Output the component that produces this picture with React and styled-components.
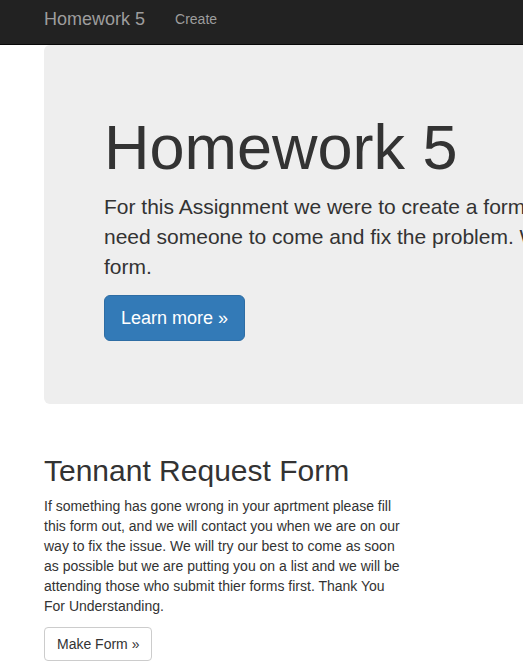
import React from 'react';
import styled, { createGlobalStyle } from 'styled-components';

const GlobalStyle = createGlobalStyle`
  html, body {
    margin: 0;
    padding: 0;
    overflow: hidden;
    background: #fff;
  }
  body {
    font-family: "Liberation Sans", Arial, Helvetica, sans-serif;
    font-size: 14px;
    line-height: 1.428571;
    color: #333;
  }
`;

// Top navbar (dark)
const Navbar = styled.nav`
  background-color: #222;
  border-bottom: 1px solid #080808;
  height: 44px;
`;

const Container = styled.div`
  width: 1170px;
  margin-left: 29px;
  padding: 0 15px;
  box-sizing: border-box;
`;

const NavInner = styled(Container)`
  display: flex;
  align-items: flex-start;
`;

const Brand = styled.a`
  display: block;
  margin-left: -15px;
  padding: 9px 15px 15px;
  font-size: 18px;
  line-height: 20px;
  color: #9d9d9d;
  text-decoration: none;
`;

const NavLink = styled.a`
  display: block;
  padding: 9px 15px;
  font-size: 14px;
  line-height: 20px;
  color: #9d9d9d;
  text-decoration: none;
`;

const Jumbotron = styled.div`
  background-color: #eee;
  border-radius: 6px;
  padding: 48px 60px 63px;
  margin-bottom: 30px;
`;

const Title = styled.h1`
  font-size: 63px;
  font-weight: 500;
  line-height: 1.1;
  margin: 20px 0 10px;
  color: #333;
`;

const Lead = styled.p`
  font-size: 21px;
  font-weight: 200;
  line-height: 30px;
  margin: 0 0 13px;
  white-space: nowrap;
`;

const Button = styled.a`
  display: inline-block;
  box-sizing: border-box;
  border: 1px solid ${(p) => (p.primary ? '#2e6da4' : '#ccc')};
  background-color: ${(p) => (p.primary ? '#337ab7' : '#fff')};
  color: ${(p) => (p.primary ? '#fff' : '#333')};
  font-size: ${(p) => (p.large ? '18px' : '14px')};
  line-height: ${(p) => (p.large ? '24px' : '20px')};
  padding: ${(p) => (p.large ? '10px 16px' : '6px 12px')};
  border-radius: ${(p) => (p.large ? '6px' : '4px')};
  text-decoration: none;
  cursor: pointer;
`;

const Row = styled.div`
  display: flex;
  margin: 0 -15px;
`;

const Col = styled.div`
  width: 390px;
  padding: 0 15px;
  box-sizing: border-box;
`;

const Heading = styled.h2`
  font-size: 30px;
  font-weight: 500;
  line-height: 1.1;
  margin: 20px 0 10px;
`;

const Text = styled.p`
  margin: 0 0 10px;
`;

export default function App() {
  return (
    <>
      <GlobalStyle />
      <Navbar>
        <NavInner>
          <Brand href="#">Homework 5</Brand>
          <NavLink href="#">Create</NavLink>
        </NavInner>
      </Navbar>
      <Container>
        <Jumbotron>
          <Title>Homework 5</Title>
          <Lead>
            For this Assignment we were to create a form for an apartment complex so that tenants that have an issue and
            <br />
            need someone to come and fix the problem. We made this so tenants can tell us what is wrong by filling out the
            <br />
            form.
          </Lead>
          <Button primary large href="#">Learn more &raquo;</Button>
        </Jumbotron>
        <Row>
          <Col>
            <Heading>Tennant Request Form</Heading>
            <Text>
              If something has gone wrong in your aprtment please fill this form out, and we will contact you
              when we are on our way to fix the issue. We will try our best to come as soon as possible but we
              are putting you on a list and we will be attending those who submit thier forms first. Thank You
              For Understanding.
            </Text>
            <Button href="#">Make Form &raquo;</Button>
          </Col>
        </Row>
      </Container>
    </>
  );
}
